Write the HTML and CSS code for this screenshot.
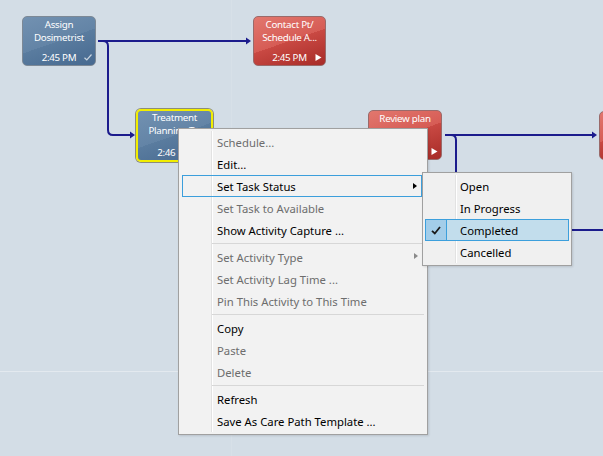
FILE: index.html
```html
<!DOCTYPE html>
<html lang="en">
<head>
    <meta charset="UTF-8">
    <title>Care Path</title>
    <link rel="stylesheet" href="styles.css">
</head>
<body>
    <div class="canvas">
        <!-- connectors -->
        <svg class="links" width="603" height="456" viewBox="0 0 603 456">
            <g fill="none" stroke="#1b1b8c" stroke-width="2">
                <path d="M98 41 H247"/>
                <path d="M103 41 Q108 41 108 46 V130 Q108 135 113 135 H131"/>
                <path d="M445 135 H593"/>
                <path d="M451 135 Q456 135 456 140 V174"/>
                <path d="M570 230 H603"/>
            </g>
            <g fill="#1b1b8c">
                <polygon points="246,37.5 251,41 246,44.5"/>
                <polygon points="130,131.5 135,135 130,138.5"/>
                <polygon points="592,131.5 597,135 592,138.5"/>
            </g>
        </svg>

        <div class="node blue n-assign">
            <div class="title">Assign<br>Dosimetrist</div>
            <div class="foot">2:45 PM
                <svg class="ico" width="8" height="7" viewBox="0 0 8 7"><path d="M0.5 3.8 L2.8 6 L7.5 0.5" fill="none" stroke="#c9d4df" stroke-width="1.2"/></svg>
            </div>
        </div>

        <div class="node red n-contact">
            <div class="title">Contact Pt/<br>Schedule A...</div>
            <div class="foot">2:45 PM
                <svg class="ico" width="7" height="7" viewBox="0 0 7 7"><polygon points="0.5,0 6.5,3.5 0.5,7" fill="#fff"/></svg>
            </div>
        </div>

        <div class="node blue n-treatment selected">
            <div class="title">Treatment<br>Planning T...</div>
            <div class="foot">2:46 PM</div>
        </div>

        <div class="node red n-review">
            <div class="title">Review plan<br>T...</div>
            <div class="foot">2:46 PM
                <svg class="ico" width="7" height="7" viewBox="0 0 7 7"><polygon points="0.5,0 6.5,3.5 0.5,7" fill="#fff"/></svg>
            </div>
        </div>

        <div class="node red n-edge"></div>

        <!-- context menu -->
        <div class="menu main-menu">
            <div class="menu-list">
                <div class="item off">Schedule...</div>
                <div class="item">Edit...</div>
                <div class="item focus">Set Task Status<span class="arrow"></span></div>
                <div class="item off">Set Task to Available</div>
                <div class="item">Show Activity Capture ...</div>
                <div class="sep"></div>
                <div class="item off">Set Activity Type<span class="arrow"></span></div>
                <div class="item off">Set Activity Lag Time ...</div>
                <div class="item off">Pin This Activity to This Time</div>
                <div class="sep"></div>
                <div class="item">Copy</div>
                <div class="item off">Paste</div>
                <div class="item off">Delete</div>
                <div class="sep"></div>
                <div class="item">Refresh</div>
                <div class="item">Save As Care Path Template ...</div>
            </div>
        </div>

        <div class="menu sub-menu">
            <div class="menu-list">
                <div class="item">Open</div>
                <div class="item">In Progress</div>
                <div class="item checked">
                    <span class="check">
                        <svg width="10" height="9" viewBox="0 0 10 9"><path d="M1 4.8 L3.8 7.5 L9 1" fill="none" stroke="#1a1a1a" stroke-width="1.8"/></svg>
                    </span>Completed</div>
                <div class="item">Cancelled</div>
            </div>
        </div>
    </div>
</body>
</html>
```

FILE: styles.css
```css
body {
    margin: 0;
    font-family: "Noto Sans", "Open Sans", sans-serif;
    background: #d3dde6;
}

.canvas {
    position: relative;
    width: 603px;
    height: 456px;
    overflow: hidden;
    background:
        linear-gradient(#e3e9ef, #e3e9ef) 0 371px / 100% 1px no-repeat,
        linear-gradient(#d7e0e8, #d7e0e8) 231px 0 / 1px 100% no-repeat,
        #d3dde6;
}

.links {
    position: absolute;
    left: 0;
    top: 0;
}

/* activity nodes */
.node {
    position: absolute;
    box-sizing: border-box;
    width: 74px;
    height: 50px;
    border: 1px solid #7d8996;
    border-radius: 5px;
    display: flex;
    flex-direction: column;
    color: #fff;
    text-align: center;
    font-size: 9.8px;
    letter-spacing: -0.3px;
    line-height: 13px;
    overflow: hidden;
}

.node.blue {
    background: linear-gradient(161deg, #7291b1 0%, #6384a6 50%, #5a7c9f 50%, #466990 100%);
}

.node.red {
    border-color: #9a6a6a;
    background: linear-gradient(161deg, #e2776e 0%, #d65c55 50%, #c94943 50%, #a72b27 100%);
}

.title {
    padding-top: 1px;
    white-space: nowrap;
}

.foot {
    margin-top: auto;
    padding-bottom: 1px;
    position: relative;
}

.ico {
    position: absolute;
    right: 3px;
    top: 3px;
}

.n-assign { left: 22px; top: 16px; }
.n-contact { left: 253px; top: 16px; width: 73px; }
.n-review { left: 368px; top: 110px; }
.n-edge { left: 599px; top: 111px; width: 40px; height: 49px; }

.n-treatment {
    left: 136px;
    top: 109px;
    width: 77px;
    height: 53px;
}

.node.selected {
    border: 2px solid #f2ee00;
    box-shadow: 0 0 0 1px #8d8d7a;
}

.node.selected .title { padding-top: 0; }
.node.selected .foot { padding-bottom: 1px; }

/* context menus */
.menu {
    position: absolute;
    border: 1px solid #a0a0a0;
    background: #f2f2f2;
    padding: 2px;
    box-shadow: 1px 1px 2px rgba(0, 0, 0, 0.12);
    font-size: 11.3px;
    color: #000;
}

.menu-list {
    background: linear-gradient(#e2e2e2, #e2e2e2) 30px 0 / 1px 100% no-repeat,
        linear-gradient(#fff, #fff) 31px 0 / 1px 100% no-repeat;
}

.main-menu {
    left: 178px;
    top: 128px;
    width: 244px;
}

.sub-menu {
    left: 422px;
    top: 172px;
    width: 144px;
    background: #f0f0f0;
}

.item {
    position: relative;
    box-sizing: border-box;
    height: 22px;
    display: flex;
    align-items: center;
    padding-left: 35px;
    white-space: nowrap;
}

.main-menu .item {
    margin: 0 3px 0 1px;
    padding-left: 35px;
}

.item.off {
    color: #6d6d6d;
}

.main-menu .item.focus {
    border: 1px solid #3c9fdc;
    padding-left: 34px;
}

.arrow {
    position: absolute;
    right: 4px;
    top: 7px;
    border-left: 4px solid #000;
    border-top: 3.5px solid transparent;
    border-bottom: 3.5px solid transparent;
}

.item.off .arrow {
    border-left-color: #8a8a8a;
}

.item.checked {
    background: #c2ddec;
    border: 1px solid #3c9fdc;
    padding-left: 34px;
}

.check {
    position: absolute;
    left: 0;
    top: 0;
    bottom: 0;
    width: 20px;
    background: #a3cde9;
    border-right: 1px solid #3c9fdc;
    display: flex;
    align-items: center;
    justify-content: center;
}

.sep {
    height: 1px;
    margin: 2px 1px 2px 31px;
    background: #d7d7d7;
}
```
